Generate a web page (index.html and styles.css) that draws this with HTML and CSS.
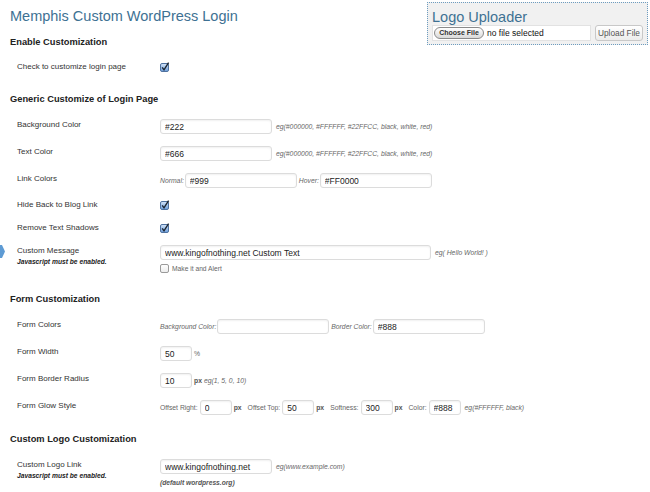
FILE: index.html
```html
<!DOCTYPE html>
<html>
<head>
<meta charset="utf-8">
<title>Memphis Custom WordPress Login</title>
<link rel="stylesheet" href="styles.css">
</head>
<body>
<div class="wrap">
  <div class="uploader">
    <h2 class="uploader-title">Logo Uploader</h2>
    <div class="uploader-row">
      <div class="file-field"><span class="file-btn">Choose File</span><span class="file-name">no file selected</span></div>
      <button class="upload-btn" type="button">Upload File</button>
    </div>
  </div>
  <h1 class="page-title">Memphis Custom WordPress Login</h1>

  <h3 class="section first">Enable Customization</h3>
  <div class="row">
    <div class="label">Check to customize login page</div>
    <div class="field">
      <svg class="cb" width="10" height="10" viewBox="0 0 10 10"><defs><linearGradient id="cg1" x1="0" y1="0" x2="0" y2="1"><stop offset="0" stop-color="#d6e6f8"/><stop offset="1" stop-color="#6a9cda"/></linearGradient></defs><rect x="0.5" y="1.5" width="8" height="8" rx="1.5" fill="url(#cg1)" stroke="#4f72a0"/><path d="M2.2 5.4 L4 7.8 L8.6 0.6" fill="none" stroke="#1c2530" stroke-width="1.4"/></svg>
    </div>
  </div>

  <h3 class="section">Generic Customize of Login Page</h3>
  <div class="row">
    <div class="label">Background Color</div>
    <div class="field"><input class="txt w112" type="text" value="#222"><span class="hint">eg(#000000, #FFFFFF, #22FFCC, black, white, red)</span></div>
  </div>
  <div class="row">
    <div class="label">Text Color</div>
    <div class="field"><input class="txt w112" type="text" value="#666"><span class="hint">eg(#000000, #FFFFFF, #22FFCC, black, white, red)</span></div>
  </div>
  <div class="row">
    <div class="label">Link Colors</div>
    <div class="field"><span class="pre">Normal:</span><input class="txt w112" type="text" value="#999"><span class="pre gap">Hover:</span><input class="txt w112" type="text" value="#FF0000"></div>
  </div>
  <div class="row tight">
    <div class="label">Hide Back to Blog Link</div>
    <div class="field">
      <svg class="cb" width="10" height="10" viewBox="0 0 10 10"><defs><linearGradient id="cg2" x1="0" y1="0" x2="0" y2="1"><stop offset="0" stop-color="#d6e6f8"/><stop offset="1" stop-color="#6a9cda"/></linearGradient></defs><rect x="0.5" y="1.5" width="8" height="8" rx="1.5" fill="url(#cg2)" stroke="#4f72a0"/><path d="M2.2 5.4 L4 7.8 L8.6 0.6" fill="none" stroke="#1c2530" stroke-width="1.4"/></svg>
    </div>
  </div>
  <div class="row tight">
    <div class="label">Remove Text Shadows</div>
    <div class="field">
      <svg class="cb" width="10" height="10" viewBox="0 0 10 10"><defs><linearGradient id="cg3" x1="0" y1="0" x2="0" y2="1"><stop offset="0" stop-color="#d6e6f8"/><stop offset="1" stop-color="#6a9cda"/></linearGradient></defs><rect x="0.5" y="1.5" width="8" height="8" rx="1.5" fill="url(#cg3)" stroke="#4f72a0"/><path d="M2.2 5.4 L4 7.8 L8.6 0.6" fill="none" stroke="#1c2530" stroke-width="1.4"/></svg>
    </div>
  </div>
  <div class="row tight">
    <svg class="marker" width="6" height="13" viewBox="0 0 6 13"><polygon points="0,0 2,0 5,6.5 2,13 0,13" fill="#5e9bd4"/></svg>
    <div class="label">Custom Message<div class="sub">Javascript must be enabled.</div></div>
    <div class="field stack">
      <div class="inline"><input class="txt w271" type="text" value="www.kingofnothing.net Custom Text"><span class="hint">eg( Hello World! )</span></div>
      <div class="alert-line">
        <svg class="cb-empty" width="9" height="9" viewBox="0 0 9 9"><defs><linearGradient id="ug1" x1="0" y1="0" x2="0" y2="1"><stop offset="0" stop-color="#ffffff"/><stop offset="1" stop-color="#ececec"/></linearGradient></defs><rect x="0.5" y="0.5" width="8" height="8" rx="1.5" fill="url(#ug1)" stroke="#9a9a9a"/></svg>
        <span class="alert-text">Make it and Alert</span>
      </div>
    </div>
  </div>

  <h3 class="section">Form Customization</h3>
  <div class="row">
    <div class="label">Form Colors</div>
    <div class="field"><span class="pre">Background Color:</span><input class="txt w112" type="text" value=""><span class="pre gap">Border Color:</span><input class="txt w112" type="text" value="#888"></div>
  </div>
  <div class="row">
    <div class="label">Form Width</div>
    <div class="field"><input class="txt w32" type="text" value="50"><span class="unit">%</span></div>
  </div>
  <div class="row">
    <div class="label">Form Border Radius</div>
    <div class="field"><input class="txt w32" type="text" value="10"><span class="unit bold">px</span><span class="hint near">eg(1, 5, 0, 10)</span></div>
  </div>
  <div class="row">
    <div class="label">Form Glow Style</div>
    <div class="field">
      <span class="glow-label first">Offset Right:</span><input class="txt w32" type="text" value="0"><span class="unit bold">px</span>
      <span class="glow-label">Offset Top:</span><input class="txt w32" type="text" value="50"><span class="unit bold">px</span>
      <span class="glow-label">Softness:</span><input class="txt w32" type="text" value="300"><span class="unit bold">px</span>
      <span class="glow-label">Color:</span><input class="txt w32" type="text" value="#888"><span class="hint">eg(#FFFFFF, black)</span>
    </div>
  </div>

  <h3 class="section last">Custom Logo Customization</h3>
  <div class="row">
    <div class="label">Custom Logo Link<div class="sub">Javascript must be enabled.</div></div>
    <div class="field stack">
      <div class="inline"><input class="txt w112" type="text" value="www.kingofnothing.net"><span class="hint">eg(www.example.com)</span></div>
      <div class="default-note">(default wordpress.org)</div>
    </div>
  </div>
</div>
</body>
</html>
```

FILE: styles.css
```css
* { box-sizing: border-box; }

body {
  margin: 0;
  background: #fff;
  font-family: "Liberation Sans", Arial, Helvetica, sans-serif;
  color: #333;
}

.wrap {
  padding: 0 0 0 10px;
}

/* Logo uploader box */
.uploader {
  float: right;
  width: 221px;
  height: 43px;
  margin: 2px 2px 0 0;
  padding: 7px 4px 0 4px;
  border: 1px dotted #6d9cbf;
  background: #f1f1f1;
}

.uploader-title {
  margin: 0;
  font-size: 14.5px;
  line-height: 15px;
  font-weight: normal;
  color: #3e7193;
}

.uploader-row {
  display: flex;
  justify-content: space-between;
  height: 16px;
}

.file-field {
  width: 159px;
  height: 16px;
  background: #fff;
  border: 1px solid #e2e2e2;
  display: flex;
  align-items: center;
  padding-left: 1px;
}

.file-btn {
  display: block;
  width: 50px;
  height: 12px;
  border: 1px solid #8a8a8a;
  border-radius: 6px;
  background: linear-gradient(#ffffff, #d9d9d9);
  font-size: 7px;
  font-weight: bold;
  color: #333;
  line-height: 10px;
  text-align: center;
}

.file-name {
  margin-left: 3px;
  font-size: 8.5px;
  color: #111;
}

.upload-btn {
  width: 48px;
  height: 16px;
  padding: 0;
  border: 1px solid #c8c8c8;
  border-radius: 3px;
  background: linear-gradient(#ffffff, #ececec);
  font-family: "Liberation Sans", Arial, sans-serif;
  font-size: 8.3px;
  color: #555;
}

.page-title {
  margin: 0;
  padding-top: 6px;
  font-size: 14.5px;
  line-height: 20px;
  font-weight: normal;
  color: #3e7193;
}

/* Sections */
.section {
  margin: 14px 0 8px;
  font-size: 9.3px;
  font-weight: bold;
  line-height: 12px;
  color: #222;
}

.section.first {
  margin: 10px 0 7px;
}

.section.last {
  margin-top: 12px;
}

/* Rows */
.row {
  position: relative;
  display: grid;
  grid-template-columns: 143px 1fr;
  padding: 6px 0 6px 7px;
}

.row.tight {
  padding-top: 5px;
}

.marker {
  position: absolute;
  left: -10px;
  top: 5px;
}

.label {
  font-size: 8px;
  line-height: 12px;
  color: #333;
}

.sub {
  font-size: 6.7px;
  line-height: 9px;
  font-weight: bold;
  font-style: italic;
  color: #222;
}

.field {
  display: flex;
  align-items: center;
  min-height: 12px;
}

.field.stack {
  flex-direction: column;
  align-items: flex-start;
}

.inline {
  display: flex;
  align-items: center;
}

.cb {
  display: block;
}

.txt {
  height: 15px;
  margin: 0;
  padding: 0 4px;
  border: 1px solid #dcdcdc;
  border-radius: 3px;
  background: #fff;
  box-shadow: inset 0 1px 2px rgba(0, 0, 0, 0.06);
  font-family: "Liberation Sans", Arial, sans-serif;
  font-size: 8.5px;
  color: #222;
  outline: none;
}

.w112 { width: 112px; }
.w271 { width: 271px; }
.w32 { width: 32px; }

.hint {
  margin-left: 4px;
  font-size: 6.8px;
  font-style: italic;
  color: #666;
  white-space: nowrap;
}

.hint.near {
  margin-left: 2px;
}

.pre {
  margin-right: 1px;
  font-size: 6.8px;
  font-style: italic;
  color: #666;
  white-space: nowrap;
}

.pre.gap {
  margin-left: 2px;
}

.unit {
  margin-left: 2px;
  font-size: 6.8px;
  color: #666;
}

.unit.bold {
  font-weight: bold;
  color: #555;
}

.glow-label {
  margin: 0 2px 0 6px;
  font-size: 6.8px;
  color: #666;
  white-space: nowrap;
}

.glow-label.first {
  margin-left: 0;
}

.alert-line {
  display: flex;
  align-items: center;
  margin-top: 4px;
  height: 9px;
}

.cb-empty {
  display: block;
}

.alert-text {
  margin-left: 3px;
  font-size: 6.7px;
  color: #666;
}

.default-note {
  margin-top: 4px;
  font-size: 6.7px;
  line-height: 9px;
  font-weight: bold;
  font-style: italic;
  color: #555;
}
```
